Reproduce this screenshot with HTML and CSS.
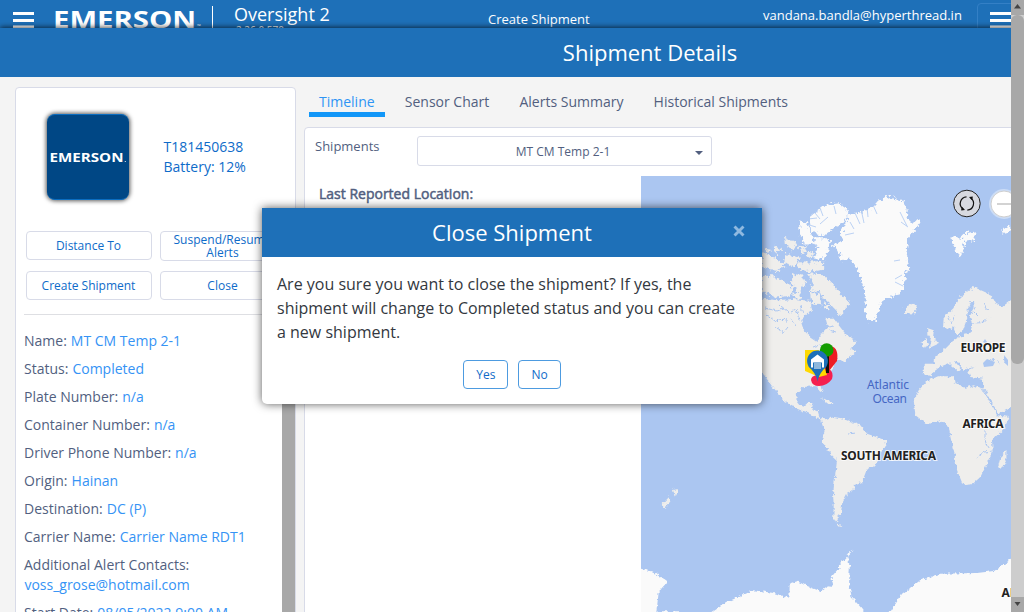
FILE: index.html
```html
<!DOCTYPE html>
<html lang="en">
<head>
<meta charset="utf-8">
<title>Oversight 2 - Shipment Details</title>
<link rel="stylesheet" href="styles.css">
</head>
<body>
<div class="viewport">
  <div class="app">
    <nav class="nav">
      <svg class="burger" viewBox="0 0 21 18"><path d="M0 3.500h21M0 10.500h21M0 17h21"/></svg>
      <svg class="brand" viewBox="0 0 150 24"><text x="-1" y="20.500" class="brand-text" textLength="143" lengthAdjust="spacingAndGlyphs">EMERSON</text><text x="143" y="21" class="brand-tm">™</text></svg>
      <div class="divider"></div>
      <div class="product"><div class="product-name">Oversight 2</div><div class="version">2.26.0.570</div></div>
      <div class="nav-title">Create Shipment</div>
      <div class="user"><div>vandana.bandla@hyperthread.in</div><div class="company">Connect'd Control IT</div></div>
      <div class="toggle"><svg class="burger" viewBox="0 0 27 18"><path d="M0 3.500h27M0 10.500h27M0 17h27"/></svg></div>
    </nav>
    <header class="page-head">Shipment Details</header>
    <main class="content">
      <section class="card">
        <div class="asset">
          <div class="asset-logo"><svg viewBox="0 0 82 14"><text x="2.500" y="12" class="logo-text" textLength="74" lengthAdjust="spacingAndGlyphs">EMERSON</text><circle cx="78.300" cy="11.500" r=".6" class="logo-dot"/></svg></div>
          <div class="asset-info"><div>T181450638</div><div>Battery: 12%</div></div>
        </div>
        <div class="actions">
          <button class="btn">Distance To</button><button class="btn tall">Suspend/Resume Alerts</button>
          <button class="btn">Create Shipment</button><button class="btn">Close</button>
        </div>
        <div class="lower">
          <div class="fields">
            <p>Name: <b>MT CM Temp 2-1</b></p>
            <p>Status: <b>Completed</b></p>
            <p>Plate Number: <b>n/a</b></p>
            <p>Container Number: <b>n/a</b></p>
            <p>Driver Phone Number: <b>n/a</b></p>
            <p>Origin: <b>Hainan</b></p>
            <p>Destination: <b>DC (P)</b></p>
            <p>Carrier Name: <b>Carrier Name RDT1</b></p>
            <p>Additional Alert Contacts:<br><b>voss_grose@hotmail.com</b></p>
            <p>Start Date: <b>08/05/2022 9:00 AM</b></p>
          </div>
          <div class="inner-scroll"></div>
        </div>
      </section>
      <section class="detail">
        <div class="tabs"><span class="tab active">Timeline</span><span class="tab">Sensor Chart</span><span class="tab">Alerts Summary</span><span class="tab">Historical Shipments</span></div>
        <div class="panel">
          <div class="picker"><label>Shipments</label><div class="select"><span>MT CM Temp 2-1</span><i class="caret"></i></div></div>
          <div class="split">
            <h4>Last Reported Location:</h4>
            <svg class="map" viewBox="641 176 370 436">
              <defs>
                <filter id="coast" x="-5%" y="-5%" width="110%" height="110%"><feTurbulence type="fractalNoise" baseFrequency=".28" numOctaves="2" seed="4"/><feDisplacementMap in="SourceGraphic" scale="5" xChannelSelector="R" yChannelSelector="G"/></filter>
                <filter id="fjord" x="-5%" y="-5%" width="110%" height="110%"><feTurbulence type="fractalNoise" baseFrequency=".3" numOctaves="2" seed="9"/><feDisplacementMap in="SourceGraphic" scale="8" xChannelSelector="R" yChannelSelector="G"/></filter>
              </defs>
              <g filter="url(#fjord)" transform="translate(.8 .5)">
                <g transform="translate(760 170) scale(.33333)">
                  <path class="ice" d="M260 135L300 125 330 115 350 92 385 78 428 90 437 115 442 150 455 160 470 142 480 155 455 185 442 205 437 245 445 290 432 320 428 360 400 378 370 387 355 410 345 450 320 452 313 420 315 370 305 340 290 295 270 265 235 270 240 245 216 228 243 210 240 185 253 165Z"/>
                  <path class="ice" d="M146 140L190 104 235 98 268 125 244 155 209 180 182 198 150 178ZM114 153L138 155 152 190 160 222 130 222 118 192ZM158 203L208 203 203 238 187 266 157 260 170 235ZM572 196L600 205 610 188 645 183 640 209 612 214 600 259 584 238 575 218ZM722 173L748 168 750 187 730 190Z"/>
                  <path class="land" d="M3 245L35 258 75 283 52 302 3 290ZM73 200L107 218 97 240 75 225ZM40 226L62 238 46 254ZM15 235L30 238 24 250ZM75 250L115 262 98 290 70 273ZM113 275L150 276 190 274 190 298 150 303 113 296ZM112 226L138 228 130 254ZM140 240L160 245 152 268 138 260ZM3 315L45 318 96 350 88 376 45 382 20 368 3 360ZM94 308L123 316 134 340 115 367 94 348ZM142 308L188 311 220 343 240 372 265 395 243 437 215 408 188 382 174 362 145 359 157 340ZM147 362L177 372 182 404 152 402ZM92 366L120 368 114 388ZM188 400L207 405 200 420ZM435 410L457 400 469 414 452 432 436 428Z"/>
                </g>
              </g>
              <g filter="url(#coast)" transform="translate(.4 .3)">
                <g transform="translate(760 320) scale(.33333)" class="land">
                  <path d="M-40 -70L50 -60 100 -64 150 -58 155 -30 130 -10 122 5 130 30 150 50 172 65 182 40 202 20 195 -5 220 -5 235 15 255 40 287 65 270 85 287 95 262 115 248 125 235 115 222 130 215 150 190 165 178 185 186 215 178 213 165 197 130 200 110 215 108 240 125 262 145 245 157 245 152 265 172 272 178 292 198 298 190 302 160 286 135 275 110 265 75 245 50 215 20 180 8 160 -40 110Z"/>
                  <path d="M490 130L522 130 525 108 555 85 580 60 605 45 630 40 635 10 670 8 690 -10 665 -25 680 -50 695 -60 725 -40 770 -75 770 260 753 262 715 280 690 240 668 205 668 175 630 170 622 150 642 140 608 148 595 127 582 122 602 145 592 153 565 128 540 138 522 153 508 167 490 160Z"/>
                  <path d="M548 20L550 -10 578 -35 598 -70 640 -100 692 -77 704 -55 684 -38 690 -5 660 6 635 9 628 -12 643 -40 640 -62 622 -35 620 -5 608 28 590 44 578 18 563 27Z"/>
                  <path d="M500 182L530 168 580 168 582 185 615 202 640 195 667 207 685 240 710 285 745 290 730 325 695 360 697 395 675 440 660 470 640 488 607 492 590 450 582 400 570 350 565 318 540 303 500 312 465 285 460 240 475 210ZM713 440L721 408 738 388 738 420 722 449ZM500 23L520 30 518 46 534 70 508 82 514 58 501 42ZM483 65L498 56 503 75 486 82ZM182 234L205 240 224 252 205 252Z"/>
                </g>
                <g transform="translate(640 400) scale(.33333)">
                  <path class="land" d="M538 55L556 60 580 50 612 55 660 75 680 100 735 120 738 135 715 165 710 190 680 205 665 245 640 255 640 270 620 280 605 310 602 335 590 362 578 360 580 320 578 280 585 220 590 180 570 160 545 120 553 90 545 68ZM585 363L604 378 592 375ZM61 317L88 288 90 303 74 324ZM96 261L112 273 103 291Z"/>
                  <path class="ice" d="M-20 500L40 515 80 545 55 575 45 660 -20 660ZM60 633H120V650H60ZM215 636L260 605 340 570 400 578 447 592 448 550 470 543 495 555 540 573 560 558 580 560 573 530 590 510 600 490 621 468 628 500 626 550 633 590 665 625 690 660 200 660ZM740 650L785 580 840 540 900 520 1010 518 1060 512 1130 465 1130 660ZM612 467L637 450 622 466Z"/>
                </g>
              </g>
              <g class="water" filter="url(#coast)">
                <path d="M765 308l12 3 8-3M766 314l9 7 10-2 4 5M780 305l9 8 6-3M790 318l6 9M775 327l9 5 4-5M796 309l4 12M823 321l5 6 6-1M829 330l7 2M948 316l4 8 3-9M972 301l-3 10M974 311l5 5M984 304l4 6M985 431v9l3 9M977 457l7-5 10-1M813 347l7-2 5 4M987 362l8-3 6 5M1004 357l2 7M983 387l7 14M848 434l8-1M800 305l3 7"/>
              </g>
              <g class="inlets"><path d="M855 213l5 11M861 209l3 14M867 207l1 10M850 222l4 7M873 205l4 9M900 212l7 14M845 235l9-2M808 219l9-1M806 224l10 3M820 208l3 8M834 206l2 8M815 213l5 6M902 275l-7 4M903 286l-8-4M900 260l-6 1M908 227l-7-5M820 224l8-7"/></g>
              <path class="sea-line" d="M983 342l6 3-4-6zM983 363l4-4 8 3-2 4-9 1zM1004 355l4 5v6l-3-3z"/>
              <g class="pins">
                <path class="pink" d="M811 380q0-4 6-5l12-6q5 3 3 10q-5 7-13 7q-7 0-8-6z"/>
                <path class="red" d="M825 376l-7-19q3-12 13-11q8 2 6 15z"/>
                <path class="yellow" d="M805 350h14l8 25-8 2-14-6z"/>
                <path class="black" d="M825 354h4v19h-3z"/>
                <circle cx="826.700" cy="350" r="6.800" class="green"/>
                <path class="blue" d="M817.500 381.500q-1-6-6-12a10.400 10.400 0 1 1 12 0q-5 6-6 12z"/>
                <path class="ware" d="M811 359.500l6.500-5 6.500 5v8h-2v-5h-9v5h-2zM814 363.500h7v1h-7zM814 365.500h7v1h-7zM814 367.500h7v1h-7z"/>
              </g>
              <g class="place"><text x="960.500" y="351.500" textLength="45">EUROPE</text><text x="962.500" y="427.500" textLength="41">AFRICA</text><text x="841" y="459.500" textLength="95">SOUTH AMERICA</text><text x="1001.500" y="596.500">ANTARCTICA</text></g>
              <g class="ocean"><text x="867" y="388.500" textLength="42">Atlantic</text><text x="872.500" y="402.500" textLength="34.500">Ocean</text></g>
              <g class="refresh"><circle cx="966.900" cy="203.500" r="13.300"/><path d="M966.500 196.900a6.600 6.600 0 0 0-3.700 11.800M961.800 209.300l1.800-.3M967.300 210.100a6.600 6.600 0 0 0 3.700-11.800M972 197.700l-1.800.3"/><path class="tip" d="M969 197l3.800-.6-.5 4zM965 210l-3.800.6.5-4z"/></g>
              <g class="zoom"><circle cx="1004" cy="204" r="15" class="halo"/><circle cx="1004" cy="204" r="13"/><path d="M997 204h15"/></g>
            </svg>
          </div>
        </div>
      </section>
    </main>
  </div>
  <div class="scrollbar"><svg viewBox="0 0 13 15"><path d="M6.500 4l3.500 4.500h-7z"/></svg><div class="thumb"></div><svg class="down" viewBox="0 0 13 15"><path d="M6.500 9l3-4h-6z"/></svg></div>
</div>
<div class="modal">
  <div class="modal-head"><h2>Close Shipment</h2><svg viewBox="0 0 12 12"><path d="M1.500 1.500l9 9M10.500 1.500l-9 9"/></svg></div>
  <p>Are you sure you want to close the shipment? If yes, the shipment will change to Completed status and you can create a new shipment.</p>
  <div class="modal-actions"><button>Yes</button><button>No</button></div>
</div>
</body>
</html>
```
FILE: styles.css
```css
* { box-sizing: border-box; }
body { margin: 0; font-family: "Open Sans", "Noto Sans", sans-serif; font-size: 14px; line-height: 20px; color: #525f7f; background: #f4f4f4; overflow: hidden; }
h2, h4, p { margin: 0; font-weight: 400; }
button { font-family: inherit; cursor: pointer; }
.viewport { display: flex; width: 1024px; height: 612px; }
.app { width: 1011px; height: 612px; overflow: hidden; display: flex; flex-direction: column; }

.nav { flex: none; height: 28px; overflow: hidden; background: #1e70b8; color: #fff; display: flex; align-items: flex-start; padding-left: 13px; }
.burger { flex: none; width: 21px; height: 18px; margin-top: 10px; }
.burger path { stroke: #fff; stroke-width: 3.2; fill: none; }
.brand { flex: none; width: 150px; height: 24px; margin: 7px 0 0 20px; overflow: visible; }
.brand-text { font: 700 24px "Open Sans", sans-serif; fill: #fff; }
.brand-tm { font: 5px "Open Sans", sans-serif; fill: #fff; }
.divider { flex: none; width: 1px; height: 30px; margin: 6px 0 0 8px; background: #fff; }
.product { flex: none; width: 254px; padding: 2px 0 0 21px; }
.product-name { font-size: 18px; line-height: 24px; }
.version { font-size: 10px; line-height: 12px; margin: -2px 0 0 2px; }
.nav-title { flex: none; width: 275px; padding: 9px 0 0 21px; font-size: 13px; }
.user { flex: none; width: 235px; padding: 5px 0 0 21px; font-size: 13px; white-space: nowrap; }
.company { font-size: 11px; line-height: 14px; }
.toggle { flex: none; width: 60px; height: 40px; margin-top: 3px; border: 1px solid #3480c6; border-radius: 4px; padding-left: 12px; }
.toggle .burger { margin-top: 6px; width: 27px; }

.page-head { flex: none; height: 49px; width: 1300px; background: #1e70b8; color: #fff; text-align: center; font-size: 22px; line-height: 49px; box-shadow: 0 -1px 5px rgba(0, 0, 0, .65); z-index: 1; }
.content { flex: 1; display: flex; padding: 10px 0 0 15px; min-height: 0; background: #f4f4f4; position: relative; z-index: 2; }

.card { flex: none; width: 281px; background: #fff; border: 1px solid #d8dbe8; border-radius: 4px 4px 0 0; display: flex; flex-direction: column; height: 620px; }
.asset { flex: none; display: flex; padding: 26px 0 0 31px; color: #0e6bc9; height: 143px; }
.asset-logo { width: 82px; height: 86px; border-radius: 8px; background: #004785; border-top: 1px solid #0b6dc0; border-bottom: 1px solid #0b6dc0; box-shadow: 0 0 4px 1px rgba(0, 0, 0, .65); padding-top: 35px; }
.asset-logo svg { display: block; width: 82px; height: 14px; }
.logo-text { font: 700 12px "Open Sans", sans-serif; fill: #fff; }
.logo-dot { fill: #fff; }
.asset-info { padding: 23px 0 0 34.500px; }
.actions { flex: none; display: grid; grid-template-columns: 126px 126px; grid-template-rows: 30px 29px; gap: 10px 8px; align-items: start; padding-left: 10px; }
.btn { height: 29px; border: 1px solid #d8dbe8; border-radius: 4px; background: #fff; color: #0e6bc9; font-size: 12px; line-height: 13px; padding: 0 9px 0 8px; }
.tall { height: 30px; }
.lower { flex: 1; display: flex; justify-content: space-between; padding-top: 14px; }
.fields { width: 258px; margin-left: 8px; border-top: 1px solid #dedfe3; padding-top: 16px; }
.fields p { margin-bottom: 8px; }
.fields b { font-weight: 400; color: #3593f5; margin-left: .4px; }
.inner-scroll { width: 13px; background: #a8a8a8; }

.detail { flex: none; width: 900px; margin-left: 8px; }
.tabs { display: flex; height: 30px; margin-left: 5px; gap: 10.200px; }
.tab { padding: 5px 10px 0; border-bottom: 5px solid transparent; }
.tab.active { color: #2e94f4; border-color: #1297f8; }
.panel { margin-top: 10px; height: 500px; background: #fff; border: 1px solid #d8dbe8; border-radius: 4px; padding-left: 10px; }
.picker { display: flex; height: 48px; font-size: 13px; }
.picker label { width: 102px; padding-top: 8px; }
.select { width: 295px; height: 30px; margin-top: 8px; border: 1px solid #d8dbe8; border-radius: 3px; display: flex; align-items: center; justify-content: center; position: relative; font-size: 12px; padding: 2px 3px 0 0; }
.caret { position: absolute; right: 8px; top: 14px; border: 4px solid transparent; border-top-color: #525f7f; border-bottom: 0; }
.split { display: flex; }
.split h4 { width: 326px; padding: 8px 0 0 4px; font-weight: 400; -webkit-text-stroke: .5px #525f7f; }
.map { flex: none; width: 370px; height: 436px; background: #abc6f1; }

.land { fill: #efeeec; }
.ice { fill: #fafafa; }
.water path { fill: none; stroke: #abc6f1; stroke-width: 1; }
.inlets path { fill: none; stroke: #abc6f1; stroke-width: .8; }
.sea-line { fill: #abc6f1; }
.pink { fill: #f51f4e; } .red { fill: #ec1c24; } .yellow { fill: #ffd900; } .black { fill: #111; } .green { fill: #149c00; } .blue { fill: #1e70b8; } .ware { fill: #fff; }
.place text { font: 700 12px "Noto Sans", sans-serif; fill: #222; stroke: #fff; stroke-width: 2px; stroke-opacity: .75; paint-order: stroke; }
.ocean text { font: 12px "Noto Sans", sans-serif; fill: #4566c4; }
.refresh circle { fill: #d7d9e0; stroke: #222; stroke-width: 1; }
.refresh path { fill: none; stroke: #111; stroke-width: 1.2; }
.refresh .tip { fill: #111; stroke: none; }
.zoom circle { fill: #fff; stroke: #cfcfcf; stroke-width: 1; }
.zoom .halo { fill: #cbdcf6; stroke: none; }
.zoom path { stroke: #c9c9c9; stroke-width: 1.6; }

.scrollbar { width: 13px; background: #cdcdcd; display: flex; flex-direction: column; }
.scrollbar svg { flex: none; width: 13px; height: 15px; background: #a8a8a8; }
.scrollbar path { fill: #444; }
.thumb { height: 349px; background: #a8a8a8; border-radius: 6px; }
.down { margin-top: auto; }

.modal { position: absolute; z-index: 3; left: 262px; top: 208px; width: 500px; height: 196px; background: #fff; border-radius: 0 0 5px 5px; box-shadow: 0 0 10px rgba(0, 0, 0, .65); color: #333840; }
.modal-head { height: 49px; background: #1e70b8; color: #fff; display: flex; align-items: center; padding-right: 17px; }
.modal-head h2 { flex: 1; font-size: 22px; line-height: 49px; text-align: center; padding-left: 29px; }
.modal-head svg { width: 12px; height: 12px; margin-top: -3px; }
.modal-head path { stroke: #8fb9e0; stroke-width: 2.9; }
.modal p { padding: 15px 15px 0; font-size: 16px; line-height: 24px; }
.modal-actions { display: flex; justify-content: center; gap: 10px; margin-top: 16px; }
.modal-actions button { height: 29px; padding: 0 12px; border: 1px solid #4d9be0; border-radius: 4px; background: #fff; color: #0e6bc9; font-size: 12px; }
```
